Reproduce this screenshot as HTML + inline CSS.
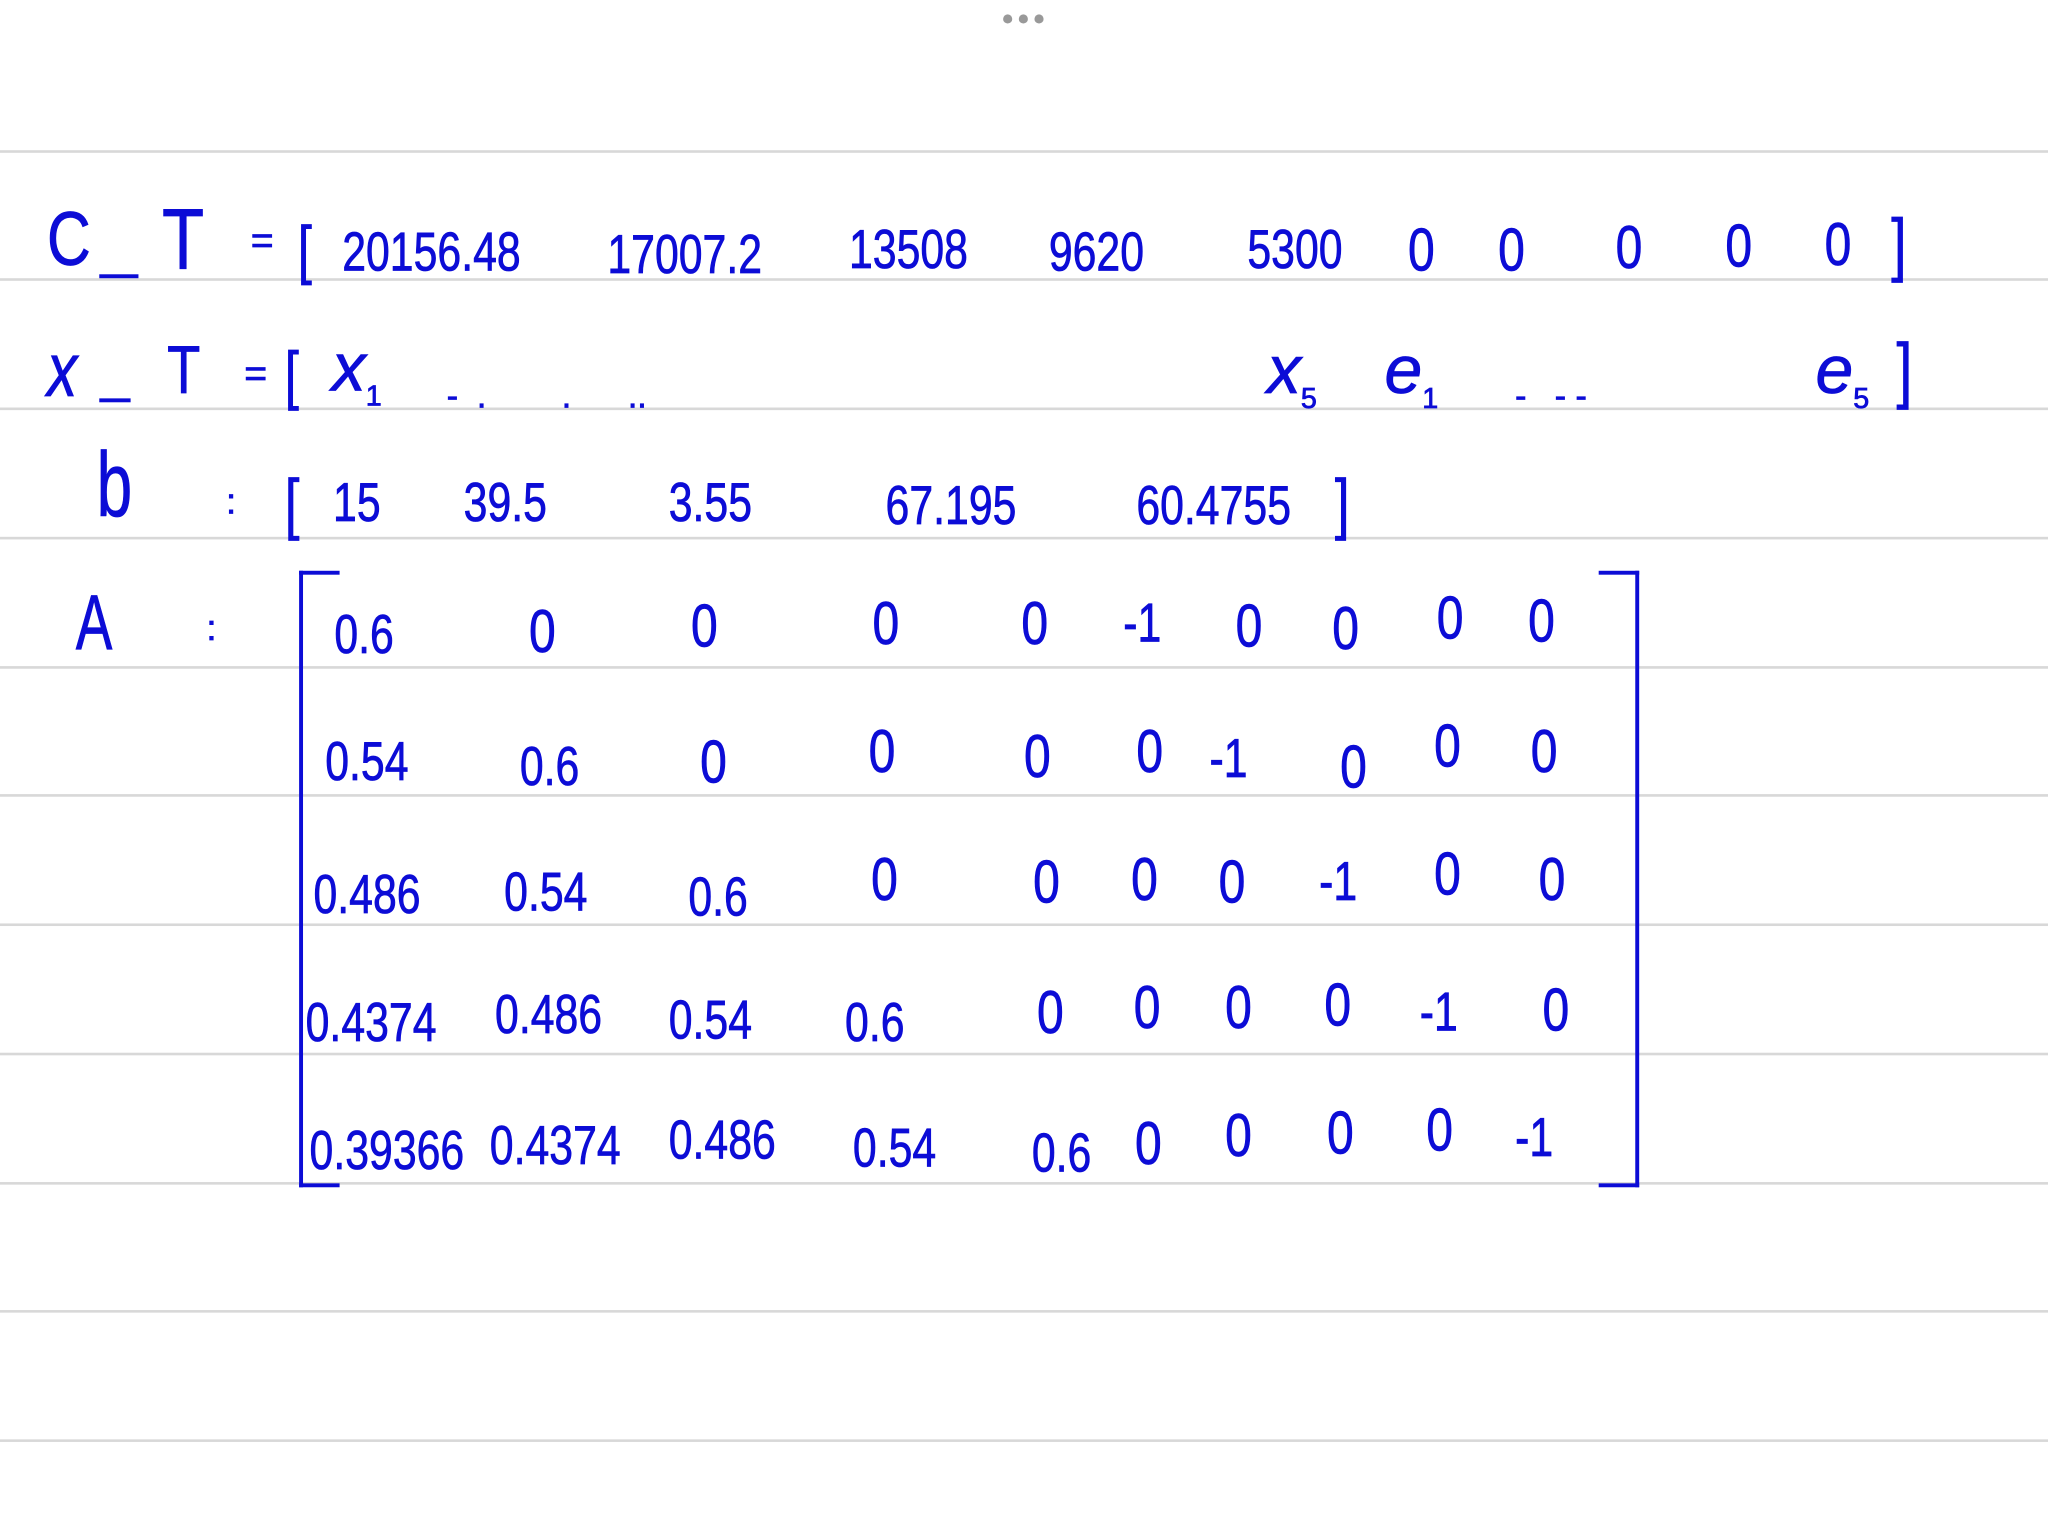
<!DOCTYPE html>
<html><head><meta charset="utf-8"><style>
html,body{margin:0;padding:0;background:#fff;overflow:hidden}
#w{position:absolute;left:0;top:0;width:1568px;height:1176px;transform:scale(1.306122);transform-origin:0 0}
.l{position:absolute;left:0;width:1568px;height:2px;background:#d8d8d8}
.t{position:absolute;color:#0c0cd6;font-family:"Liberation Sans",sans-serif;white-space:nowrap;line-height:1;transform-origin:0 100%;-webkit-text-stroke:0.6px #0c0cd6}
.n{font-size:42px;transform:scaleX(0.78)}
.z{font-size:46px;transform:scaleX(0.8)}
.b{position:absolute;border:3px solid #0c0cd6}
.d{position:absolute;top:11px;width:7px;height:7px;border-radius:50%;background:#999}
</style></head><body><div id="w">
<div class="d" style="left:768px"></div><div class="d" style="left:780px"></div><div class="d" style="left:792px"></div>
<div class="l" style="top:115px"></div><div class="l" style="top:213px"></div><div class="l" style="top:312px"></div><div class="l" style="top:411px"></div><div class="l" style="top:510px"></div><div class="l" style="top:608px"></div><div class="l" style="top:707px"></div><div class="l" style="top:806px"></div><div class="l" style="top:905px"></div><div class="l" style="top:1003px"></div><div class="l" style="top:1102px"></div>

<div class="t" style="left:36px;top:155px;font-size:58px;transform:scaleX(0.8)">C</div>
<div class="t" style="left:76px;top:210px;width:30px;height:3px;background:#0c0cd6"></div>
<div class="t" style="left:124px;top:150px;font-size:66px;transform:scaleX(0.8)">T</div>
<div class="t" style="left:192px;top:170px;font-size:30px">=</div>
<div class="t n" style="left:228px;top:166px;font-size:50px">[</div>
<div class="t n" style="left:262px;top:172px">20156.48</div>
<div class="t n" style="left:465px;top:174px">17007.2</div>
<div class="t n" style="left:650px;top:170px">13508</div>
<div class="t n" style="left:803px;top:172px">9620</div>
<div class="t n" style="left:955px;top:170px">5300</div>
<div class="t z" style="left:1078px;top:168px">0</div>
<div class="t z" style="left:1147px;top:168px">0</div>
<div class="t z" style="left:1237px;top:166px">0</div>
<div class="t z" style="left:1321px;top:165px">0</div>
<div class="t z" style="left:1397px;top:164px">0</div>
<div class="t n" style="left:1448px;top:160px;font-size:54px">]</div>

<div class="t" style="left:36px;top:255px;font-size:58px;font-style:italic;transform:scaleX(0.8)">x</div>
<div class="t" style="left:76px;top:305px;width:24px;height:3px;background:#0c0cd6"></div>
<div class="t" style="left:128px;top:258px;font-size:52px;transform:scaleX(0.8)">T</div>
<div class="t" style="left:187px;top:272px;font-size:30px">=</div>
<div class="t n" style="left:218px;top:262px;font-size:50px">[</div>
<div class="t" style="left:254px;top:256px;font-size:52px;font-style:italic">x<sub style="font-size:22px;font-style:normal">1</sub></div>
<div class="t" style="left:342px;top:290px;font-size:26px">-&nbsp;&nbsp;.&nbsp;&nbsp;&nbsp;&nbsp;&nbsp;&nbsp;&nbsp;&nbsp;.&nbsp;&nbsp;&nbsp;&nbsp;&nbsp;&nbsp;..</div>
<div class="t" style="left:970px;top:258px;font-size:52px;font-style:italic">x<sub style="font-size:22px;font-style:normal">5</sub></div>
<div class="t" style="left:1060px;top:258px;font-size:52px;font-style:italic">e<sub style="font-size:22px;font-style:normal">1</sub></div>
<div class="t" style="left:1160px;top:290px;font-size:26px">-&nbsp;&nbsp;&nbsp;-&nbsp;-</div>
<div class="t" style="left:1390px;top:258px;font-size:52px;font-style:italic">e<sub style="font-size:22px;font-style:normal">5</sub></div>
<div class="t n" style="left:1452px;top:255px;font-size:56px">]</div>

<div class="t" style="left:74px;top:336px;font-size:70px;transform:scaleX(0.7)">b</div>
<div class="t" style="left:173px;top:370px;font-size:28px">:</div>
<div class="t n" style="left:218px;top:360px;font-size:52px">[</div>
<div class="t n" style="left:255px;top:364px">15</div>
<div class="t n" style="left:355px;top:364px">39.5</div>
<div class="t n" style="left:512px;top:364px">3.55</div>
<div class="t n" style="left:678px;top:366px">67.195</div>
<div class="t n" style="left:870px;top:366px">60.4755</div>
<div class="t n" style="left:1022px;top:360px;font-size:52px">]</div>

<div class="t" style="left:58px;top:447px;font-size:60px;transform:scaleX(0.7)">A</div>
<div class="t" style="left:158px;top:467px;font-size:28px">:</div>

<div class="b" style="left:229px;top:437px;width:28px;height:466px;border-right:none"></div>
<div class="b" style="left:1224px;top:437px;width:28px;height:466px;border-left:none"></div>

<div class="t n" style="left:256px;top:465px">0.6</div>
<div class="t z" style="left:405px;top:460px">0</div>
<div class="t z" style="left:529px;top:456px">0</div>
<div class="t z" style="left:668px;top:454px">0</div>
<div class="t z" style="left:782px;top:454px">0</div>
<div class="t n" style="left:860px;top:456px">-1</div>
<div class="t z" style="left:946px;top:456px">0</div>
<div class="t z" style="left:1020px;top:458px">0</div>
<div class="t z" style="left:1100px;top:450px">0</div>
<div class="t z" style="left:1170px;top:452px">0</div>

<div class="t n" style="left:249px;top:562px">0.54</div>
<div class="t n" style="left:398px;top:566px">0.6</div>
<div class="t z" style="left:536px;top:560px">0</div>
<div class="t z" style="left:665px;top:552px">0</div>
<div class="t z" style="left:784px;top:556px">0</div>
<div class="t z" style="left:870px;top:552px">0</div>
<div class="t n" style="left:926px;top:560px">-1</div>
<div class="t z" style="left:1026px;top:564px">0</div>
<div class="t z" style="left:1098px;top:548px">0</div>
<div class="t z" style="left:1172px;top:552px">0</div>

<div class="t n" style="left:240px;top:664px">0.486</div>
<div class="t n" style="left:386px;top:662px">0.54</div>
<div class="t n" style="left:527px;top:666px">0.6</div>
<div class="t z" style="left:667px;top:650px">0</div>
<div class="t z" style="left:791px;top:652px">0</div>
<div class="t z" style="left:866px;top:650px">0</div>
<div class="t z" style="left:933px;top:652px">0</div>
<div class="t n" style="left:1010px;top:654px">-1</div>
<div class="t z" style="left:1098px;top:646px">0</div>
<div class="t z" style="left:1178px;top:650px">0</div>

<div class="t n" style="left:234px;top:762px">0.4374</div>
<div class="t n" style="left:379px;top:756px">0.486</div>
<div class="t n" style="left:512px;top:760px">0.54</div>
<div class="t n" style="left:647px;top:762px">0.6</div>
<div class="t z" style="left:794px;top:752px">0</div>
<div class="t z" style="left:868px;top:748px">0</div>
<div class="t z" style="left:938px;top:748px">0</div>
<div class="t z" style="left:1014px;top:746px">0</div>
<div class="t n" style="left:1087px;top:754px">-1</div>
<div class="t z" style="left:1181px;top:750px">0</div>

<div class="t n" style="left:237px;top:860px">0.39366</div>
<div class="t n" style="left:375px;top:856px">0.4374</div>
<div class="t n" style="left:512px;top:852px">0.486</div>
<div class="t n" style="left:653px;top:858px">0.54</div>
<div class="t n" style="left:790px;top:862px">0.6</div>
<div class="t z" style="left:869px;top:852px">0</div>
<div class="t z" style="left:938px;top:846px">0</div>
<div class="t z" style="left:1016px;top:844px">0</div>
<div class="t z" style="left:1092px;top:842px">0</div>
<div class="t n" style="left:1160px;top:850px">-1</div>
</div></body></html>
